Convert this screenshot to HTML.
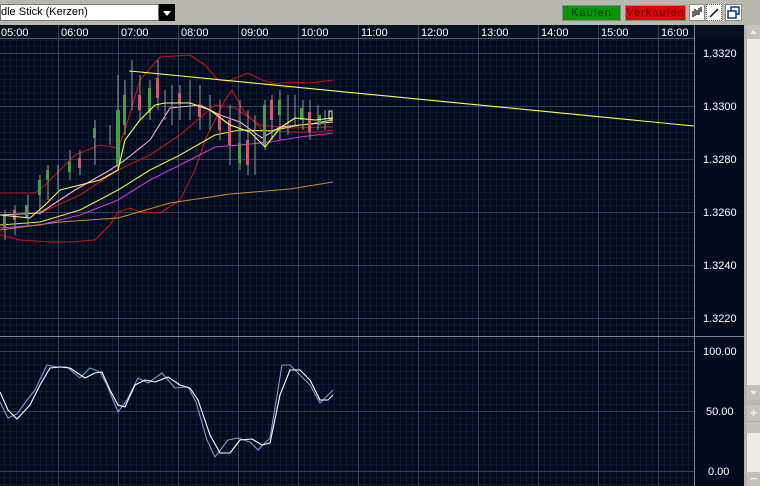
<!DOCTYPE html>
<html><head><meta charset="utf-8"><style>
body{margin:0;width:760px;height:486px;overflow:hidden;background:#b8b5ad;font-family:"Liberation Sans",sans-serif;position:relative}
.a{position:absolute}
.t{color:#fff;font-size:11px}
</style></head><body>
<div class="a" style="left:0;top:0;width:760px;height:25px;background:#bab7af"></div>
<div class="a" style="left:0;top:4px;width:159px;height:17px;background:#fff;border:1px solid #777;box-sizing:border-box;font-size:11px;line-height:15px">dle Stick (Kerzen)</div>
<div class="a" style="left:159px;top:4px;width:16px;height:17px;background:#000"><svg width="16" height="17"><path d="M4 7h8l-4 5z" fill="#fff"/></svg></div>
<div class="a" style="left:562px;top:5px;width:59px;height:16px;background:#009a00;border:1px solid #888;box-sizing:border-box;color:#003300;font-size:11px;text-align:center;line-height:14px;letter-spacing:1px">Kaufen</div>
<div class="a" style="left:625px;top:5px;width:61px;height:16px;background:#e00000;border:1px solid #888;box-sizing:border-box;color:#550000;font-size:11px;text-align:center;line-height:14px;letter-spacing:1px">Verkaufen</div>
<div class="a" style="left:689px;top:4px;width:16px;height:17px;background:#fff;border:1px solid #888;box-sizing:border-box"><svg width="14" height="15"><path d="M3 6v6M5 4v7M7 5v5M9 3v7M11 2v5" stroke="#000" stroke-width="1.2"/></svg></div>
<div class="a" style="left:706px;top:4px;width:16px;height:17px;background:#fff;border:1px dotted #555;box-sizing:border-box"><svg width="14" height="15"><path d="M3 12L11 4" stroke="#000" stroke-width="1.3"/></svg></div>
<div class="a" style="left:725px;top:4px;width:17px;height:17px;background:#fff;border:1px solid #888;box-sizing:border-box"><svg width="15" height="15"><rect x="5" y="2" width="8" height="7" fill="none" stroke="#003a80" stroke-width="1.5"/><rect x="2" y="6" width="8" height="7" fill="#fff" stroke="#003a80" stroke-width="1.5"/></svg></div>

<svg class="a" style="left:0;top:25px" width="744" height="461">
<defs>
<pattern id="g" width="6" height="6.63" patternUnits="userSpaceOnUse" x="-2" y="1.5"><path d="M0 0V7M0 0H6" stroke="#1a2740" stroke-width="1"/></pattern>
</defs>
<rect width="744" height="461" fill="#000b1d"/>
<rect x="0" y="0" width="744" height="13" fill="#02101f"/>
<rect x="0" y="13" width="694" height="448" fill="url(#g)"/>
<g stroke="#34405a" stroke-width="1">
<path d="M58.5 0V461M118.5 0V461M178.5 0V461M238.5 0V461M298.5 0V461M358.5 0V461M418.5 0V461M478.5 0V461M538.5 0V461M598.5 0V461M658.5 0V461"/>
<path d="M0 28.5H694M0 81.5H694M0 134.5H694M0 187.5H694M0 240.5H694M0 293.5H694M0 326.5H694M0 386.5H694M0 446.5H694"/>
<path d="M0 13.5H694" stroke="#556"/>
<path d="M694.5 0V461M0 311.5H744" stroke="#7a8496"/>
</g>
<g class="t" fill="#fff" font-size="11" font-family="Liberation Sans">
<text x="1" y="11">05:00</text><text x="61" y="11">06:00</text><text x="121" y="11">07:00</text><text x="181" y="11">08:00</text><text x="241" y="11">09:00</text><text x="301" y="11">10:00</text><text x="361" y="11">11:00</text><text x="421" y="11">12:00</text><text x="481" y="11">13:00</text><text x="541" y="11">14:00</text><text x="601" y="11">15:00</text><text x="661" y="11">16:00</text>
<text x="703" y="32">1.3320</text><text x="703" y="85">1.3300</text><text x="703" y="138">1.3280</text><text x="703" y="191">1.3260</text><text x="703" y="244">1.3240</text><text x="703" y="297">1.3220</text>
<text x="703" y="330">100.00</text><text x="706" y="390">50.00</text><text x="708" y="450">0.00</text>
</g>
<g transform="translate(0,-25)" fill="none" stroke-width="1.1" stroke-linejoin="round">
<polyline stroke="#cc1111" points="0,193 35,193 45,185 60,170 75,155 100,145 118,148 125,130 140,80 160,57 190,55 205,65 218,80 228,81 248,73 262,80 275,84 290,82 310,83 333,80"/>
<polyline stroke="#cc1111" points="0,235 20,240 50,242 70,242 95,240 110,225 118,212 130,208 140,212 160,213 180,200 195,170 205,140 215,120 225,100 232,90 243,110 262,130 290,132 320,132 333,130"/>
<polyline stroke="#cc1111" points="0,215 40,213 80,195 118,170 150,155 180,135 215,105 235,108 260,125 290,128 333,127"/>
<polyline stroke="#ffaacc" points="0,215 40,213 75,190 110,170 125,160 150,140 170,108 200,105 220,115 240,122 262,138 280,127 310,124 333,120"/>
<polyline stroke="#eeee33" points="0,225 40,222 80,210 118,190 150,170 180,155 215,135 240,130 270,131 300,125 333,122"/>
<polyline stroke="#dd33dd" points="0,228 40,225 80,215 118,200 150,180 180,165 215,147 240,145 270,142 300,137 333,133"/>
<polyline stroke="#cc8822" points="0,230 60,222 118,218 170,203 230,194 290,189 333,182"/>
<g stroke-width="1">
<path stroke="#999" d="M5 210V240M15 205V235M28 195V225M40 175V215M48 165V200M58 165V190M70 150V180M80 150V175M95 120V165M110 125V145M118 75V170M125 80V135M132 60V110M140 75V120M150 80V120M158 60V110M165 90V120M172 85V125M180 85V120M190 80V120M200 85V130M210 95V130M220 100V140M230 105V165M240 100V170M248 110V175M255 115V175M265 100V150M272 95V140M280 90V140M288 95V135M295 95V125M303 100V130M310 100V140M318 105V130M325 110V130"/>
<g fill="#4a9a4a" stroke="none"><rect x="3" y="215" width="3" height="12"/><rect x="25" y="205" width="3" height="12"/><rect x="38" y="180" width="3" height="15"/><rect x="46" y="170" width="3" height="10"/><rect x="68" y="162" width="3" height="10"/><rect x="93" y="128" width="3" height="10"/><rect x="116" y="110" width="4" height="55"/><rect x="123" y="95" width="3" height="30"/><rect x="148" y="88" width="3" height="25"/><rect x="238" y="143" width="3" height="20"/><rect x="263" y="105" width="3" height="40"/><rect x="278" y="100" width="3" height="15"/><rect x="300" y="108" width="3" height="12"/><rect x="318" y="115" width="3" height="10"/></g>
<g fill="#c06070" stroke="none"><rect x="13" y="210" width="3" height="10"/><rect x="78" y="158" width="3" height="10"/><rect x="138" y="95" width="3" height="15"/><rect x="156" y="78" width="3" height="20"/><rect x="178" y="93" width="3" height="10"/><rect x="198" y="105" width="3" height="12"/><rect x="218" y="115" width="3" height="15"/><rect x="228" y="120" width="3" height="25"/><rect x="246" y="140" width="3" height="25"/><rect x="270" y="100" width="3" height="20"/><rect x="308" y="112" width="3" height="20"/></g>
<rect x="329" y="111" width="3" height="8" fill="none" stroke="#cfc"/>
</g>
<polyline stroke="#ffff55" points="0,215 30,218 45,205 60,190 80,185 100,180 118,170 125,140 140,120 155,105 165,103 175,103 190,103 210,110 230,125 250,132 265,147 280,128 295,118 315,120 333,118"/>
<path stroke="#ffff44" d="M130 72V71L694 126"/>
<polyline stroke="#7b9ad6" points="0,402 8,418 17,414 27,400 35,390 47,365 57,367 67,367 80,378 90,368 100,372 107,385 118,412 127,400 138,378 148,383 162,373 175,388 188,387 196,402 207,440 215,457 228,440 238,438 250,442 258,450 270,438 282,365 290,365 300,375 310,385 320,403 333,390"/>
<polyline stroke="#ffffff" points="0,392 8,410 17,419 30,405 40,385 50,368 60,367 70,368 85,378 95,373 102,372 110,390 118,405 125,407 135,385 145,380 155,382 168,377 180,385 190,388 198,400 210,435 220,453 230,453 240,440 252,439 262,445 270,443 280,395 290,370 300,370 310,380 320,400 328,400 333,395"/>
</g>
</svg>
<div class="a" style="left:747px;top:25px;width:13px;height:461px;background:#eeebe5"></div>
<div class="a" style="left:747px;top:25px;width:13px;height:14px;background:#c6c2ba"><svg width="13" height="14"><path d="M3 9h7l-3.5-4z" fill="#eee"/></svg></div>
<div class="a" style="left:747px;top:385px;width:13px;height:15px;background:#c6c2ba"><svg width="13" height="15"><path d="M3 6h7l-3.5 4z" fill="#eee"/></svg></div>
<div class="a" style="left:747px;top:400px;width:13px;height:5px;background:#bab7af"></div>
<div class="a" style="left:747px;top:405px;width:13px;height:16px;background:#c6c2ba;color:#eee;font-size:13px;font-weight:bold;text-align:center;line-height:16px">+</div>
<div class="a" style="left:747px;top:421px;width:13px;height:11px;background:#c6c2ba;border-top:1px solid #aaa"></div>
<div class="a" style="left:747px;top:472px;width:13px;height:14px;background:#c6c2ba;color:#eee;font-size:13px;font-weight:bold;text-align:center;line-height:14px">−</div>
</body></html>
